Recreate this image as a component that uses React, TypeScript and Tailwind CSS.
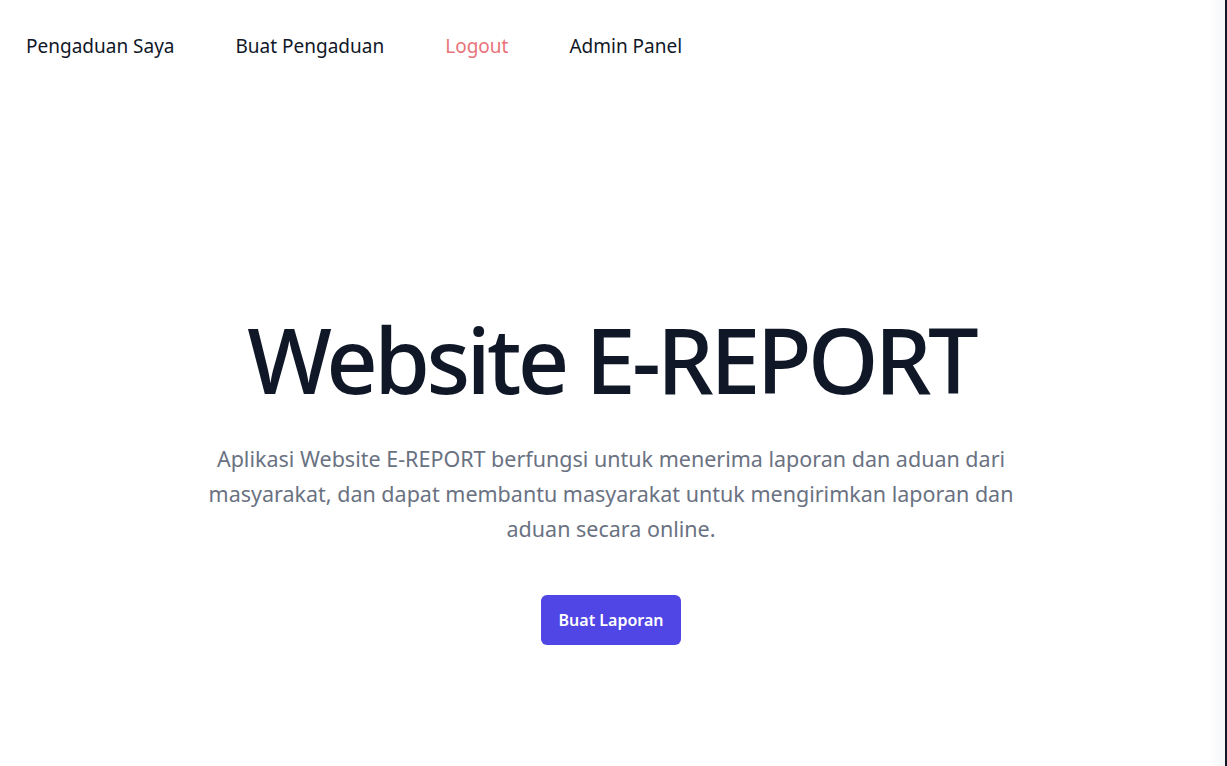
import React from "react"

const navItems = [
  { label: "Pengaduan Saya", className: "text-gray-900" },
  { label: "Buat Pengaduan", className: "text-gray-900" },
  { label: "Logout", className: "text-[#e8737a]" },
  { label: "Admin Panel", className: "text-gray-900" },
]

export default function App() {
  return (
    <div
      className="relative min-h-screen h-[766px] bg-white overflow-hidden"
      style={{ fontFamily: '"Noto Sans", "Open Sans", sans-serif' }}
    >
      <nav className="flex items-center pl-[26px] pt-[33px]">
        {navItems.map((item) => (
          <a key={item.label} href="#" className={`mr-[61px] text-[19px] leading-[26px] ${item.className}`}>
            {item.label}
          </a>
        ))}
      </nav>

      <main className="flex flex-col items-center text-center pt-[250px] pr-[5px]">
        <h1 className="text-[90px] leading-[100px] font-medium text-gray-900 tracking-[-3.7px]">
          Website E-REPORT
        </h1>
        <p className="mt-[32px] max-w-[840px] text-[21.5px] leading-[35px] text-gray-500">
          Aplikasi Website E-REPORT berfungsi untuk menerima laporan dan aduan dari masyarakat, dan dapat
          membantu masyarakat untuk mengirimkan laporan dan aduan secara online.
        </p>
        <button className="mt-[49px] w-[140px] h-[50px] rounded-md bg-[#4f46e5] text-white text-[16px] font-semibold">
          Buat Laporan
        </button>
      </main>

      <div className="absolute top-0 right-0 h-full w-[18px] bg-gradient-to-r from-transparent to-gray-100" />
      <div className="absolute top-0 right-0 h-full w-[2px] bg-gray-900" />
    </div>
  )
}
